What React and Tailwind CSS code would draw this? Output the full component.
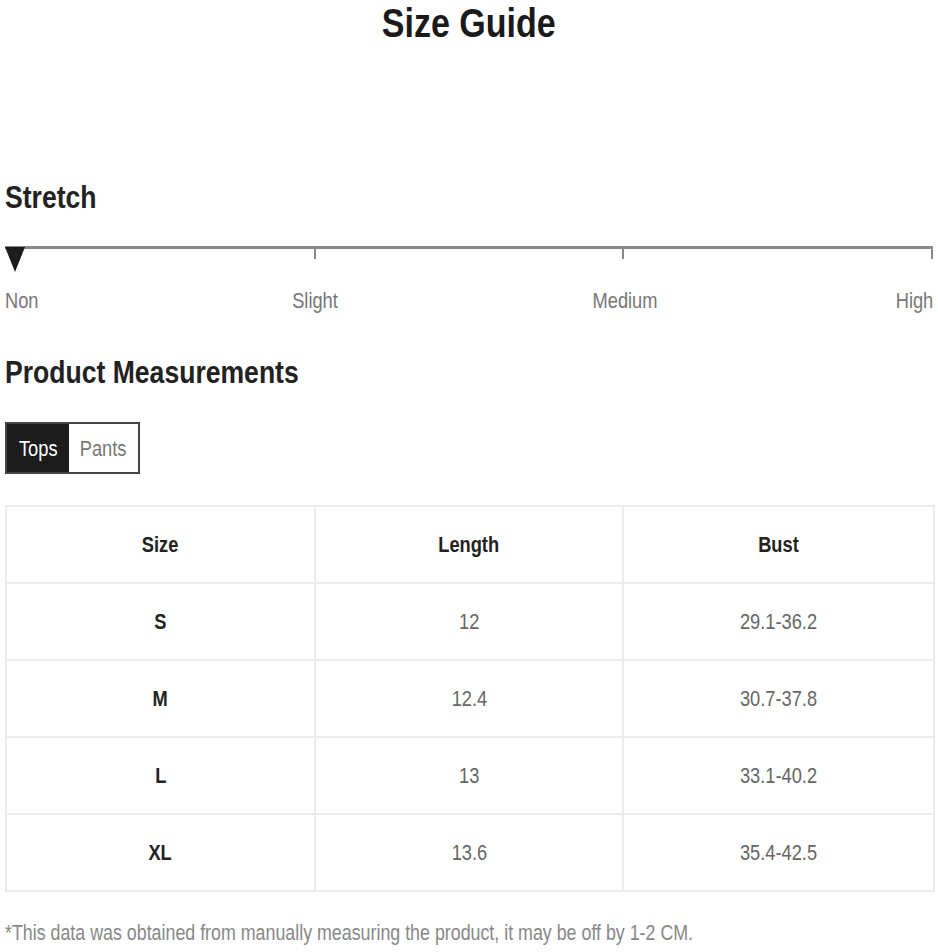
import React from "react";

const rows = [
  ["S", "12", "29.1-36.2"],
  ["M", "12.4", "30.7-37.8"],
  ["L", "13", "33.1-40.2"],
  ["XL", "13.6", "35.4-42.5"],
];

function T({ children, o = "c", narrow = false }) {
  const origin = o === "l" ? "origin-left" : o === "r" ? "origin-right" : "origin-center";
  const scale = narrow ? "scale-x-[0.81]" : "scale-x-[0.83]";
  return <span className={`inline-block whitespace-nowrap ${scale} ${origin}`}>{children}</span>;
}

export default function App() {
  return (
    <div
      className="w-[938px] h-[952px] bg-white overflow-hidden px-[5px] text-[#222]"
      style={{ fontFamily: '"Liberation Sans", Arial, sans-serif' }}
    >
      <h1 className="text-center text-[41px] leading-[47px] font-bold text-[#1a1a1a]">
        <T>Size Guide</T>
      </h1>

      <h2 className="mt-[130px] text-[32px] leading-[40px] font-bold text-[#222]">
        <T o="l">Stretch</T>
      </h2>

      <div className="mt-[29px] relative">
        <div className="h-[3px] bg-[#8a8a8a]" />
        <div className="flex justify-between h-[10px]">
          <div className="w-[2px]" />
          <div className="w-[2px] h-[10px] bg-[#888]" />
          <div className="w-[2px] h-[10px] bg-[#888]" />
          <div className="w-[2px] h-[10px] bg-[#888]" />
        </div>
        <svg className="absolute left-0 top-[1px]" width="20" height="25" viewBox="0 0 20 25">
          <polygon points="0,0 20,0 10,25" fill="#1c1c1c" />
        </svg>
      </div>

      <div className="relative h-[26px] mt-[29px] text-[22px] leading-[26px] text-[#777]">
        <span className="absolute left-0 top-0"><T o="l">Non</T></span>
        <span className="absolute left-[310px] top-0 -translate-x-1/2"><T>Slight</T></span>
        <span className="absolute left-[620px] top-0 -translate-x-1/2"><T>Medium</T></span>
        <span className="absolute right-0 top-0"><T o="r">High</T></span>
      </div>

      <h2 className="mt-[38px] text-[32px] leading-[40px] font-bold text-[#222]">
        <T o="l">Product Measurements</T>
      </h2>

      <div className="mt-[30px] flex w-[135px] h-[52px] border-2 border-[#444] text-[22px]">
        <div className="w-[62px] bg-[#1c1c1c] text-white flex items-center justify-center"><T>Tops</T></div>
        <div className="flex-1 bg-white text-[#777] flex items-center justify-center"><T>Pants</T></div>
      </div>

      <div className="mt-[31px] border-2 border-[#ececec] w-[930px]">
        <div className="grid grid-cols-3 h-[77px] border-b-2 border-[#ececec] text-[22px] font-bold text-[#222]">
          <div className="flex items-center justify-center border-r-2 border-[#ececec]"><T>Size</T></div>
          <div className="flex items-center justify-center border-r-2 border-[#ececec]"><T>Length</T></div>
          <div className="flex items-center justify-center"><T>Bust</T></div>
        </div>
        {rows.map((r, i) => (
          <div
            key={r[0]}
            className={
              i < rows.length - 1
                ? "grid grid-cols-3 h-[77px] text-[22px] border-b-2 border-[#ececec]"
                : "grid grid-cols-3 h-[75px] text-[22px]"
            }
          >
            <div className="flex items-center justify-center border-r-2 border-[#ececec] font-bold text-[#222]"><T>{r[0]}</T></div>
            <div className="flex items-center justify-center border-r-2 border-[#ececec] text-[#666]"><T>{r[1]}</T></div>
            <div className="flex items-center justify-center text-[#666]"><T>{r[2]}</T></div>
          </div>
        ))}
      </div>

      <p className="mt-[28px] text-[22px] leading-[26px] text-[#888]">
        <T o="l" narrow>*This data was obtained from manually measuring the product, it may be off by 1-2 CM.</T>
      </p>
    </div>
  );
}
